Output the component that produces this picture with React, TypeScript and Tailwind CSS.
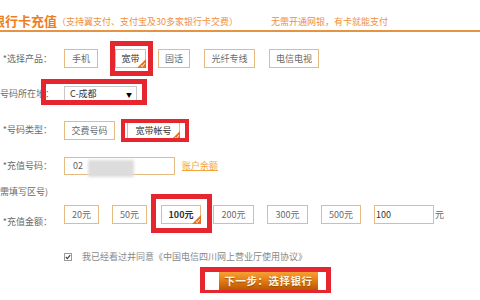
import React from 'react';

type Opt = { label: string; w: string; ml: string; selected?: boolean; bold?: boolean };

const products: Opt[] = [
  { label: '手机', w: 'w-[34px]', ml: 'ml-0' },
  { label: '宽带', w: 'w-[31px]', ml: 'ml-[17px]', selected: true },
  { label: '固话', w: 'w-[32px]', ml: 'ml-[12px]' },
  { label: '光纤专线', w: 'w-[51px]', ml: 'ml-[14px]' },
  { label: '电信电视', w: 'w-[50px]', ml: 'ml-[14px]' },
];

const numberTypes: Opt[] = [
  { label: '交费号码', w: 'w-[51px]', ml: 'ml-0' },
  { label: '宽带帐号', w: 'w-[53px]', ml: 'ml-[12px]', selected: true },
];

const amounts: Opt[] = [
  { label: '20元', w: 'w-[35px]', ml: 'ml-0' },
  { label: '50元', w: 'w-[35px]', ml: 'ml-[13px]' },
  { label: '100元', w: 'w-[40px]', ml: 'ml-[14px]', selected: true, bold: true },
  { label: '200元', w: 'w-[41px]', ml: 'ml-[12px]' },
  { label: '300元', w: 'w-[41px]', ml: 'ml-[13px]' },
  { label: '500元', w: 'w-[40px]', ml: 'ml-[13px]' },
];

function CornerMark() {
  return (
    <svg className="absolute bottom-0 right-0" width="9" height="9" viewBox="0 0 9 9">
      <polygon points="9,0 9,9 0,9" fill="#e8701a" />
      <path d="M4 6.5 L5.3 7.7 L7.8 4.2" stroke="#fff" strokeWidth="1" fill="none" />
    </svg>
  );
}

function OptionButton({ opt, redBox }: { opt: Opt; redBox?: string }) {
  return (
    <div className={`relative h-[19px] shrink-0 ${opt.w} ${opt.ml}`}>
      <div
        className={`h-full w-full border border-[#e6bb82] bg-white text-center text-[9px] leading-[17px] ${
          opt.selected ? 'text-[#333]' : 'text-[#6a6a6a]'
        } ${opt.bold ? 'font-bold' : ''}`}
      >
        {opt.label}
      </div>
      {opt.selected && <CornerMark />}
      {redBox && <div className={`pointer-events-none absolute border-[#e5262e] ${redBox}`} />}
    </div>
  );
}

function Label({ children, extra = '' }: { children: React.ReactNode; extra?: string }) {
  return (
    <div className={`shrink-0 whitespace-nowrap text-right text-[9px] leading-[12px] text-[#6a6a6a] ${extra}`}>
      {children}
    </div>
  );
}

export default function App() {
  return (
    <div className="relative h-[300px] w-[480px] overflow-hidden bg-white font-['Noto_Sans_CJK_SC',sans-serif]">
      <div className="ml-[-8px] flex h-[30px] items-end whitespace-nowrap pb-[2px]">
        <span className="text-[13px] font-bold leading-[14px] text-[#ee7d1e]">银行卡充值</span>
        <span className="text-[9px] leading-[12px] text-[#f0903e]">（支持翼支付、支付宝及30多家银行卡交费）</span>
        <span className="ml-[33px] text-[9px] leading-[12px] text-[#f0903e]">无需开通网银，有卡就能支付</span>
      </div>
      <div className="h-[2px] w-full bg-[#e59443]" />

      <div className="mt-[17px] flex h-[19px] items-center">
        <Label extra="w-[52px]">*选择产品：</Label>
        <div className="ml-[12px] flex">
          {products.map((p) => (
            <OptionButton
              key={p.label}
              opt={p}
              redBox={p.selected ? '-left-[5px] -right-[7px] -top-[8px] -bottom-[8px] border-[5px]' : undefined}
            />
          ))}
        </div>
      </div>

      <div className="mt-[18px] flex h-[16px] items-center">
        <Label extra="w-[52px]">号码所在地：</Label>
        <div className="relative ml-[12px] flex h-[16px] w-[73px] items-center border border-[#c8c8c8] bg-white pl-[5px] text-[9px] text-[#333]">
          <span>C-成都</span>
          <span className="ml-auto mr-[4px] text-[6px] text-black">▼</span>
          <div className="pointer-events-none absolute -left-[24px] -right-[11px] -top-[8px] -bottom-[4px] border-[5px] border-[#e5262e]" />
        </div>
      </div>

      <div className="mt-[19px] flex h-[18px] items-center">
        <Label extra="w-[52px]">*号码类型：</Label>
        <div className="ml-[12px] flex">
          {numberTypes.map((p) => (
            <OptionButton
              key={p.label}
              opt={p}
              redBox={p.selected ? '-left-[6px] -right-[9px] -top-[2px] -bottom-[2px] border-[4px]' : undefined}
            />
          ))}
        </div>
      </div>

      <div className="mt-[18px] flex h-[18px] items-center">
        <Label extra="w-[52px]">*充值号码：</Label>
        <div className="relative ml-[12px] h-[18px] w-[111px] border border-[#e6bb82] bg-white pl-[8px] text-[9px] leading-[16px] text-[#666]">
          02
          <div className="absolute left-[23px] top-[2px] h-[17px] w-[46px] bg-[#dcdcdc] blur-[1.5px]" />
        </div>
        <a className="ml-[7px] text-[9px] text-[#f3a43a] underline">账户余额</a>
      </div>

      <div className="mt-[11px] flex h-[12px] items-center">
        <Label extra="w-[48px] flex justify-end">(无需填写区号)</Label>
      </div>

      <div className="mt-[7px] flex h-[18px] items-start">
        <Label extra="w-[52px] mt-[11px]">*充值金额：</Label>
        <div className="ml-[12px] flex items-center">
          {amounts.map((p) => (
            <OptionButton
              key={p.label}
              opt={p}
              redBox={p.selected ? '-left-[10px] -right-[11px] -top-[11px] -bottom-[9px] border-[5px]' : undefined}
            />
          ))}
          <div className="ml-[13px] h-[19px] w-[60px] border border-[#e6bb82] bg-white pl-[1px] text-[9px] leading-[17px] text-[#333]">
            100
          </div>
          <span className="ml-[1px] text-[9px] text-[#666]">元</span>
        </div>
      </div>

      <div className="mt-[28px] flex h-[12px] items-center pl-[64px]">
        <span className="flex h-[8px] w-[8px] items-center justify-center border border-[#9a9a9a] bg-white">
          <svg width="6" height="6" viewBox="0 0 6 6">
            <path d="M0.8 3 L2.4 4.6 L5.2 1.2" stroke="#444" strokeWidth="1.2" fill="none" />
          </svg>
        </span>
        <span className="ml-[10px] whitespace-nowrap text-[9px] text-[#888]">
          我已经看过并同意《中国电信四川网上营业厅使用协议》
        </span>
      </div>

      <div className="ml-[200px] mt-[4px] inline-flex bg-[#e5262e] px-[5px] pb-[3px] pt-[5px]">
        <span className="h-[18px] w-[14px] bg-white" />
        <button className="h-[18px] w-[99px] bg-gradient-to-b from-[#f7a032] via-[#e27a12] to-[#b95602] text-[10.5px] font-bold leading-[18px] tracking-[0.5px] text-[#fff6e6] [text-shadow:0_1px_1px_rgba(120,50,0,0.6)]">
          下一步：选择银行
        </button>
        <span className="h-[18px] w-[8px] bg-white" />
      </div>
    </div>
  );
}
